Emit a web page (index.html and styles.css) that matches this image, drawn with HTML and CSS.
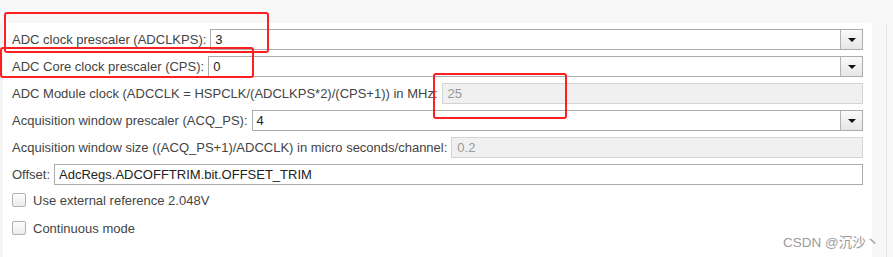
FILE: index.html
```html
<!DOCTYPE html>
<html lang="en">
<head>
    <meta charset="UTF-8">
    <meta name="viewport" content="width=device-width, initial-scale=1.0">
    <title>ADC Settings</title>
    <link rel="stylesheet" href="styles.css">
</head>
<body>

<div class="page">
    <div class="topbar"></div>
    <div class="main">
        <div class="edge"></div>
        <div class="panel">
            <div class="row">
                <label>ADC clock prescaler (ADCLKPS):</label>
                <div class="select"><span class="value">3</span><span class="arrow"></span></div>
            </div>
            <div class="row">
                <label>ADC Core clock prescaler (CPS):</label>
                <div class="select"><span class="value">0</span><span class="arrow"></span></div>
            </div>
            <div class="row">
                <label>ADC Module clock (ADCCLK = HSPCLK/(ADCLKPS*2)/(CPS+1)) in MHz:</label>
                <div class="field disabled">25</div>
            </div>
            <div class="row">
                <label>Acquisition window prescaler (ACQ_PS):</label>
                <div class="select"><span class="value">4</span><span class="arrow"></span></div>
            </div>
            <div class="row">
                <label>Acquisition window size ((ACQ_PS+1)/ADCCLK) in micro seconds/channel:</label>
                <div class="field disabled">0.2</div>
            </div>
            <div class="row">
                <label>Offset:</label>
                <div class="field">AdcRegs.ADCOFFTRIM.bit.OFFSET_TRIM</div>
            </div>
            <div class="check-row">
                <span class="checkbox"></span>
                <span>Use external reference 2.048V</span>
            </div>
            <div class="check-row">
                <span class="checkbox"></span>
                <span>Continuous mode</span>
            </div>
        </div>
        <div class="gutter"></div>
    </div>
</div>

<!-- screenshot annotations -->
<div class="mark mark-1"></div>
<div class="mark mark-2"></div>
<div class="mark mark-3"></div>

<div class="watermark">CSDN @沉沙丶</div>

</body>
</html>
```

FILE: styles.css
```css
body {
    margin: 0;
    padding: 0;
    font-family: "Liberation Sans", Arial, "Noto Sans CJK SC", sans-serif;
    font-size: 13px;
    color: #333;
    background-color: #f8f8f8;
    width: 893px;
    height: 257px;
    overflow: hidden;
    position: relative;
}

.topbar {
    height: 23px;
    background-color: #f8f8f8;
}

.main {
    display: flex;
    height: 234px;
}

.edge {
    width: 3px;
    background-color: #f4f4f4;
}

.panel {
    width: 851px;
    padding: 6px 9px 0 9px;
    background-color: #fff;
    border-top-right-radius: 4px;
}

.gutter {
    width: 14px;
    background-color: #f7f7f7;
    border-right: 1px solid #e6e6e6;
}

.row {
    display: flex;
    align-items: center;
    height: 21px;
    margin-bottom: 6px;
}

.row label {
    white-space: nowrap;
    margin-right: 4px;
    color: #444;
}

.select,
.field {
    flex: 1;
    height: 21px;
    box-sizing: border-box;
    border: 1px solid #ababab;
    background-color: #fff;
    color: #222;
    display: flex;
    align-items: center;
}

.field {
    padding-left: 4px;
}

.field.disabled {
    background-color: #f0f0f0;
    border-color: #d4d4d4;
    color: #999;
    padding-left: 5px;
}

.select .value {
    flex: 1;
    padding-left: 4px;
}

.select .arrow {
    width: 22px;
    height: 19px;
    box-sizing: border-box;
    border-left: 1px solid #b4b4b4;
    background: linear-gradient(#fafafa, #e6e6e6);
    position: relative;
}

.select .arrow::after {
    content: "";
    position: absolute;
    left: 7px;
    top: 8px;
    border-left: 4px solid transparent;
    border-right: 4px solid transparent;
    border-top: 4px solid #111;
}

.check-row {
    display: flex;
    align-items: center;
    height: 16px;
    margin-top: 7px;
    margin-bottom: 12px;
    color: #444;
}

.check-row + .check-row {
    margin-top: 0;
}

.checkbox {
    width: 14px;
    height: 14px;
    box-sizing: border-box;
    border: 1px solid #b2b2b2;
    border-radius: 2px;
    background: linear-gradient(#fdfdfd, #ececec);
    margin-right: 7px;
}

.mark {
    position: absolute;
    border: 2px solid #ff1f1f;
    border-radius: 3px;
    box-sizing: border-box;
}

.mark-1 {
    left: 4px;
    top: 12px;
    width: 265px;
    height: 41px;
}

.mark-2 {
    left: 0;
    top: 47px;
    width: 254px;
    height: 31px;
}

.mark-3 {
    left: 433px;
    top: 73px;
    width: 134px;
    height: 46px;
}

.watermark {
    position: absolute;
    left: 783px;
    top: 231px;
    font-size: 13.5px;
    color: #9b9b9b;
}
```
